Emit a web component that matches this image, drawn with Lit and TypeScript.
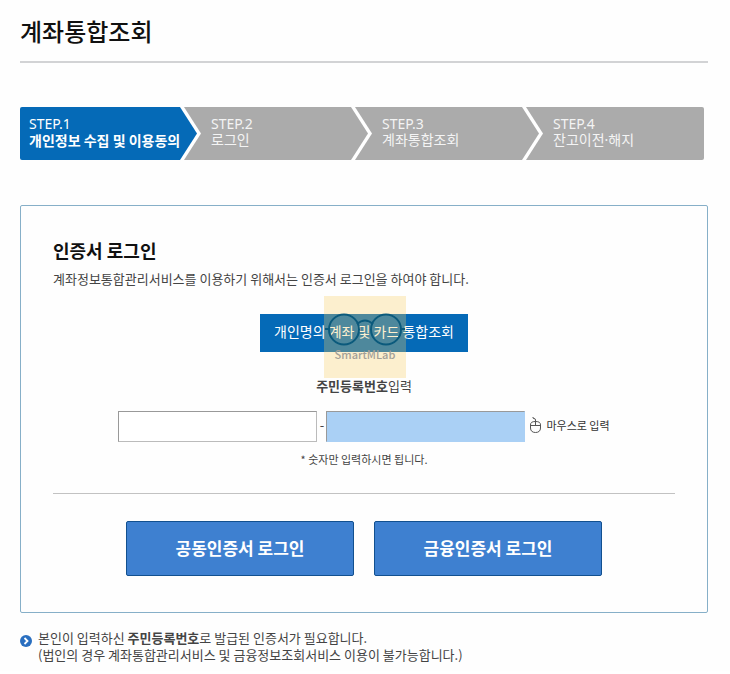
import { LitElement, html, css, svg } from "lit";
import { customElement } from "lit/decorators.js";
import { classMap } from "lit/directives/class-map.js";

const STEPS = [
  { no: "STEP.1", name: "개인정보 수집 및 이용동의" },
  { no: "STEP.2", name: "로그인" },
  { no: "STEP.3", name: "계좌통합조회" },
  { no: "STEP.4", name: "잔고이전·해지" },
];
const CURRENT = 0;

@customElement("app-root")
export class AppRoot extends LitElement {
  static styles = css`
    :host {
      display: block;
      padding: 15px 22px 8px 20px;
      background: #fefefe;
      color: #444;
      font: 13px/17px "Noto Sans CJK KR", "Noto Sans", sans-serif;
      word-break: keep-all;
    }
    * { box-sizing: border-box; }
    h1, h2, p, ol { margin: 0; padding: 0; }
    button, input { font: inherit; margin: 0; }
    button { cursor: pointer; }
    .title {
      padding-bottom: 14px;
      border-bottom: 2px solid #d2d3d5;
      color: #111;
      font-size: 24px;
      line-height: 32px;
      font-weight: 500;
    }
    .steps {
      display: grid;
      grid-template-columns: minmax(0, 160fr) minmax(0, 171fr) minmax(0, 171fr) minmax(0, 182fr);
      margin: 44px 4px 45px 0;
      list-style: none;
      border-radius: 2px;
      overflow: hidden;
      font-family: "Noto Sans", "Noto Sans CJK KR", sans-serif;
      font-size: 14px;
      line-height: 16px;
      color: #f4f4f4;
      white-space: nowrap;
    }
    .step {
      position: relative;
      height: 53px;
      padding: 9px 0 0 31px;
      background: #ababab;
    }
    .step:first-child { padding-left: 9px; }
    .step.current { background: #056ab7; color: #fff; }
    .step.current .name { font-family: "Noto Sans CJK KR", sans-serif; font-weight: 700; }
    .no, .name { display: block; }
    .chevron { position: absolute; left: 0; top: 0; width: 22px; height: 53px; }
    .gap { fill: #fff; }
    .point { fill: #ababab; }
    .point.active { fill: #056ab7; }

    .panel {
      padding: 32px;
      border: 1px solid #86afc8;
      border-radius: 2px;
      background: #fefefe;
      display: flex;
      flex-direction: column;
    }
    .panel h2 {
      color: #111;
      font-size: 18px;
      line-height: 24px;
      font-weight: 700;
    }
    .desc { margin-top: 8px; }
    .inquiry { position: relative; align-self: center; margin-top: 27px; }
    .inquiry button {
      display: block;
      height: 38px;
      padding: 0 14px 4px;
      border: 0;
      background: #056ab7;
      color: #fff;
      font-size: 14px;
      line-height: 20px;
    }
    .mark {
      position: absolute;
      left: 50%;
      top: 50%;
      width: 82px;
      height: 82px;
      margin: -37px 0 0 -40px;
      background: rgb(250 205 95 / 30%);
      pointer-events: none;
    }
    .mark svg { display: block; width: 82px; height: 50px; fill: none; stroke: #0b5a7c; stroke-width: 2; }
    .brand {
      display: block;
      text-align: center;
      font-size: 11px;
      line-height: 16px;
      font-weight: 500;
      color: #a39f97;
    }
    .idlabel { align-self: center; margin-top: 25px; }
    .entry { display: flex; align-items: center; justify-content: center; margin-top: 17px; }
    .entry input {
      flex: 0 1 199px;
      min-width: 0;
      height: 31px;
      padding: 0 8px;
      border: 1px solid #999;
      border-right-color: #bbb;
      border-bottom-color: #bbb;
      border-radius: 0;
      background: #fff;
    }
    .entry .back { border-color: #999 #aad0f5 #aad0f5 #999; background: #aad0f5; }
    .dash { flex: none; width: 9px; padding-bottom: 4px; text-align: center; }
    .mouse {
      display: flex;
      align-items: center;
      gap: 4px;
      padding: 0 0 4px 4px;
      border: 0;
      background: none;
      color: #333;
      font-size: 11px;
      line-height: 16px;
      white-space: nowrap;
    }
    .mouse svg { width: 13px; height: 18px; fill: none; stroke: #555; }
    .hint { align-self: center; margin-top: 9px; font-size: 11px; line-height: 16px; }
    .actions {
      display: grid;
      grid-template-columns: repeat(2, minmax(0, 228px));
      justify-content: center;
      gap: 20px;
      margin-top: 26px;
      padding: 27px 0 4px;
      border-top: 1px solid #c2c2c2;
    }
    .actions button {
      height: 55px;
      padding: 0 0 2px;
      border: 1px solid #12508f;
      border-radius: 2px;
      background: #3e80d0;
      color: #fff;
      font-size: 17px;
      line-height: 24px;
      font-weight: 700;
    }
    .note { display: flex; gap: 6px; margin-top: 16px; }
    .note svg { flex: none; width: 12px; height: 12px; margin-top: 6px; }
  `;

  render() {
    return html`
      <h1 class="title">계좌통합조회</h1>
      <ol class="steps">
        ${STEPS.map(
          (s, i) => html`<li class=${classMap({ step: true, current: i === CURRENT })}>
            ${i > 0
              ? html`<svg class="chevron" viewBox="0 0 22 53" aria-hidden="true">
                  ${svg`<path class="gap" d="M0 0H4L21 26.500L4 53H0Z"/>
                  <path class=${classMap({ point: true, active: i - 1 === CURRENT })} d="M0 0L17 26.500L0 53Z"/>`}
                </svg>`
              : null}
            <span class="no">${s.no}</span><span class="name">${s.name}</span>
          </li>`
        )}
      </ol>
      <form class="panel" @submit=${(e: Event) => e.preventDefault()}>
        <h2>인증서 로그인</h2>
        <p class="desc">계좌정보통합관리서비스를 이용하기 위해서는 인증서 로그인을 하여야 합니다.</p>
        <div class="inquiry">
          <button type="button">개인명의 계좌 및 카드 통합조회</button>
          <div class="mark">
            <svg viewBox="0 0 82 50" aria-hidden="true">
              <circle cx="20" cy="33.5" r="15" />
              <circle cx="62" cy="33.5" r="15" />
              <path d="M33 28Q41 21 49 28M1 33H5M77 33H81" />
            </svg>
            <span class="brand">SmartMLab</span>
          </div>
        </div>
        <label class="idlabel" for="front"><b>주민등록번호</b>입력</label>
        <div class="entry">
          <input id="front" type="text" inputmode="numeric" maxlength="6" />
          <span class="dash">-</span>
          <input class="back" type="password" inputmode="numeric" maxlength="7" aria-label="주민등록번호 뒷자리" />
          <button class="mouse" type="button">
            <svg viewBox="0 0 13 18" aria-hidden="true">
              <path d="M1.500 9C1.500 6.500 3 5.500 6.500 5.500S11.500 6.500 11.500 9V12C11.500 15 9.500 16.500 6.500 16.500S1.500 15 1.500 12ZM1.500 9.500H11.500M6.500 9.500V4Q6.500 2.500 5 2.500T4 1" />
            </svg>
            마우스로 입력
          </button>
        </div>
        <p class="hint">* 숫자만 입력하시면 됩니다.</p>
        <div class="actions">
          <button type="submit">공동인증서 로그인</button>
          <button type="submit">금융인증서 로그인</button>
        </div>
      </form>
      <div class="note">
        <svg viewBox="0 0 12 12" aria-hidden="true">
          <circle cx="6" cy="6" r="6" fill="#2a6fc0" />
          <path d="M4.500 3L7.500 6L4.500 9" fill="none" stroke="#fff" stroke-width="1.800" />
        </svg>
        <p>
          본인이 입력하신 <b>주민등록번호</b>로 발급된 인증서가 필요합니다.<br />(법인의 경우 계좌통합관리서비스 및 금융정보조회서비스 이용이 불가능합니다.)
        </p>
      </div>
    `;
  }
}
